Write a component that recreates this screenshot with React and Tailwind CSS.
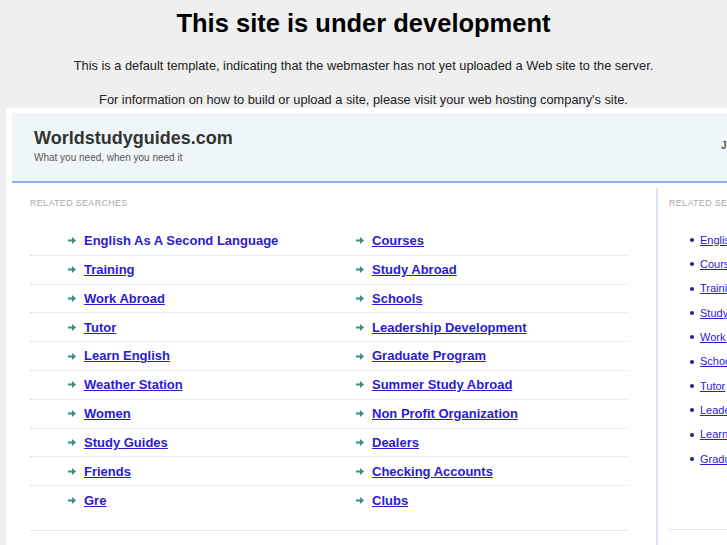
import React from "react";

const rows = [
  ["English As A Second Language", "Courses"],
  ["Training", "Study Abroad"],
  ["Work Abroad", "Schools"],
  ["Tutor", "Leadership Development"],
  ["Learn English", "Graduate Program"],
  ["Weather Station", "Summer Study Abroad"],
  ["Women", "Non Profit Organization"],
  ["Study Guides", "Dealers"],
  ["Friends", "Checking Accounts"],
  ["Gre", "Clubs"],
];

const sideLinks = [
  "English As A Second Language",
  "Courses",
  "Training",
  "Study Abroad",
  "Work Abroad",
  "Schools",
  "Tutor",
  "Leadership Development",
  "Learn English",
  "Graduate Program",
];

function Arrow() {
  return (
    <svg width="8" height="7" viewBox="0 0 8 7" className="shrink-0">
      <path d="M0 2.5h4V0l4 3.5-4 3.5V4.5H0z" fill="#3b8c83" />
    </svg>
  );
}

function LinkCell({ text, first }) {
  return (
    <div className="flex items-center gap-[8px]">
      <Arrow />
      <a
        href="#"
        className={`text-[13px] font-bold text-[#2b1bd1] ${first ? "no-underline" : "underline"}`}
      >
        {text}
      </a>
    </div>
  );
}

export default function App() {
  return (
    <div
      className="h-[545px] w-[727px] overflow-hidden bg-[#efefef] text-[#222]"
      style={{ fontFamily: '"Liberation Sans", Arial, sans-serif' }}
    >
      <div className="text-center">
        <h1 className="pt-[9px] text-[25.5px] font-bold leading-[29px] text-black">
          This site is under development
        </h1>
        <p className="mt-[20px] text-[12.8px] leading-[16px]">
          This is a default template, indicating that the webmaster has not yet uploaded a Web site to the server.
        </p>
        <p className="mt-[18px] text-[12.8px] leading-[16px]">
          For information on how to build or upload a site, please visit your web hosting company's site.
        </p>
      </div>

      <div className="ml-[6px] w-[1000px] bg-white pl-[6px] pt-[5px]">
        <div className="flex h-[70px] border-b-2 border-[#8fb0e6] bg-[#eff6f8]">
          <div className="w-[709px] pl-[22px] pt-[14px]">
            <div className="text-[18px] font-bold leading-[22px] text-[#333]">Worldstudyguides.com</div>
            <div className="mt-[3px] text-[10px] leading-[12px] text-[#555]">What you need, when you need it</div>
          </div>
          <div className="pt-[27px] text-[10px] font-bold leading-[12px] text-[#555]">June 2011</div>
        </div>

        <div className="flex">
          <div className="w-[616px] pl-[18px] pt-[14px]">
            <div className="text-[9px] leading-[12px] tracking-[0.3px] text-[#aaa]">RELATED SEARCHES</div>
            <div className="mt-[18px]">
              {rows.map((r, i) => (
                <div
                  key={r[0]}
                  className={`flex h-[28.8px] items-center ${
                    i < rows.length - 1 ? "border-b border-dotted border-[#cddcf4]" : ""
                  }`}
                >
                  <div className="w-[288px] pl-[38px]">
                    <LinkCell text={r[0]} first={i === 0} />
                  </div>
                  <div className="pl-[38px]">
                    <LinkCell text={r[1]} />
                  </div>
                </div>
              ))}
            </div>
            <div className="mt-[15px] border-t border-[#dde7f6]" />
          </div>

          <div className="ml-[28px] mt-[5px] h-[400px] w-[300px] border-l-2 border-[#dae6f8] pl-[11px] pt-[9px]">
            <div className="text-[9px] leading-[12px] tracking-[0.3px] text-[#aaa]">RELATED SEARCHES</div>
            <ul className="mt-[19px] pl-[21px]">
              {sideLinks.map((t) => (
                <li key={t} className="flex h-[24.3px] items-center gap-[6px]">
                  <span className="h-[4px] w-[4px] shrink-0 rounded-full bg-[#1f1f9e]" />
                  <a href="#" className="text-[11px] text-[#2b1bd1] underline">
                    {t}
                  </a>
                </li>
              ))}
            </ul>
            <div className="mt-[58px] border-t border-[#dde7f6]" />
          </div>
        </div>
      </div>
    </div>
  );
}
